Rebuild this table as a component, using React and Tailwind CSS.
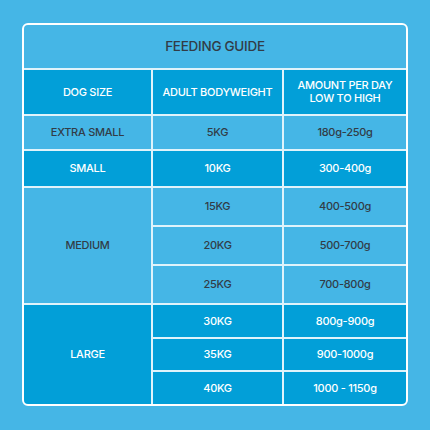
import React from "react";

const LIGHT = "bg-[#45b6e6] text-[#323c46]";
const DARK = "bg-[#029fd8] text-white";

const rows = [
	{ weight: "15KG", amount: "400-500g" },
	{ weight: "20KG", amount: "500-700g" },
	{ weight: "25KG", amount: "700-800g" },
];

const largeRows = [
	{ weight: "30KG", amount: "800g-900g" },
	{ weight: "35KG", amount: "900-1000g" },
	{ weight: "40KG", amount: "1000 - 1150g" },
];

const Cell = ({ className = "", children }) => (
	<div className={`flex items-center justify-center text-center ${className}`}>
		{children}
	</div>
);

const App = () => {
	return (
		<div
			className="w-[430px] h-[430px] bg-[#45b6e6] pt-[23px] pl-[22px]"
			style={{ fontFamily: "Inter, 'Noto Sans', sans-serif" }}
		>
			<div className="w-[386px] h-[383px] border-2 border-white rounded-md overflow-hidden bg-[#dff3fb]">
				<div className="grid grid-cols-[127px_129px_122px] grid-rows-[43px_44px_33px_35px_37px_37px_37px_32px_31px_32px] gap-[2px] text-[11px] font-medium tracking-tight">
					<Cell className={`col-span-3 ${LIGHT} text-[13.5px]`}>FEEDING GUIDE</Cell>

					<Cell className={DARK}>DOG SIZE</Cell>
					<Cell className={DARK}>ADULT BODYWEIGHT</Cell>
					<Cell className={`${DARK} leading-[13px]`}>
						AMOUNT PER DAY
						<br />
						LOW TO HIGH
					</Cell>

					<Cell className={LIGHT}>EXTRA SMALL</Cell>
					<Cell className={LIGHT}>5KG</Cell>
					<Cell className={LIGHT}>180g-250g</Cell>

					<Cell className={DARK}>SMALL</Cell>
					<Cell className={DARK}>10KG</Cell>
					<Cell className={DARK}>300-400g</Cell>

					<Cell className={`row-span-3 ${LIGHT}`}>MEDIUM</Cell>
					{rows.map((r) => (
						<React.Fragment key={r.weight}>
							<Cell className={LIGHT}>{r.weight}</Cell>
							<Cell className={LIGHT}>{r.amount}</Cell>
						</React.Fragment>
					))}

					<Cell className={`row-span-3 ${DARK}`}>LARGE</Cell>
					{largeRows.map((r) => (
						<React.Fragment key={r.weight}>
							<Cell className={DARK}>{r.weight}</Cell>
							<Cell className={DARK}>{r.amount}</Cell>
						</React.Fragment>
					))}
				</div>
			</div>
		</div>
	);
};

export default App;
